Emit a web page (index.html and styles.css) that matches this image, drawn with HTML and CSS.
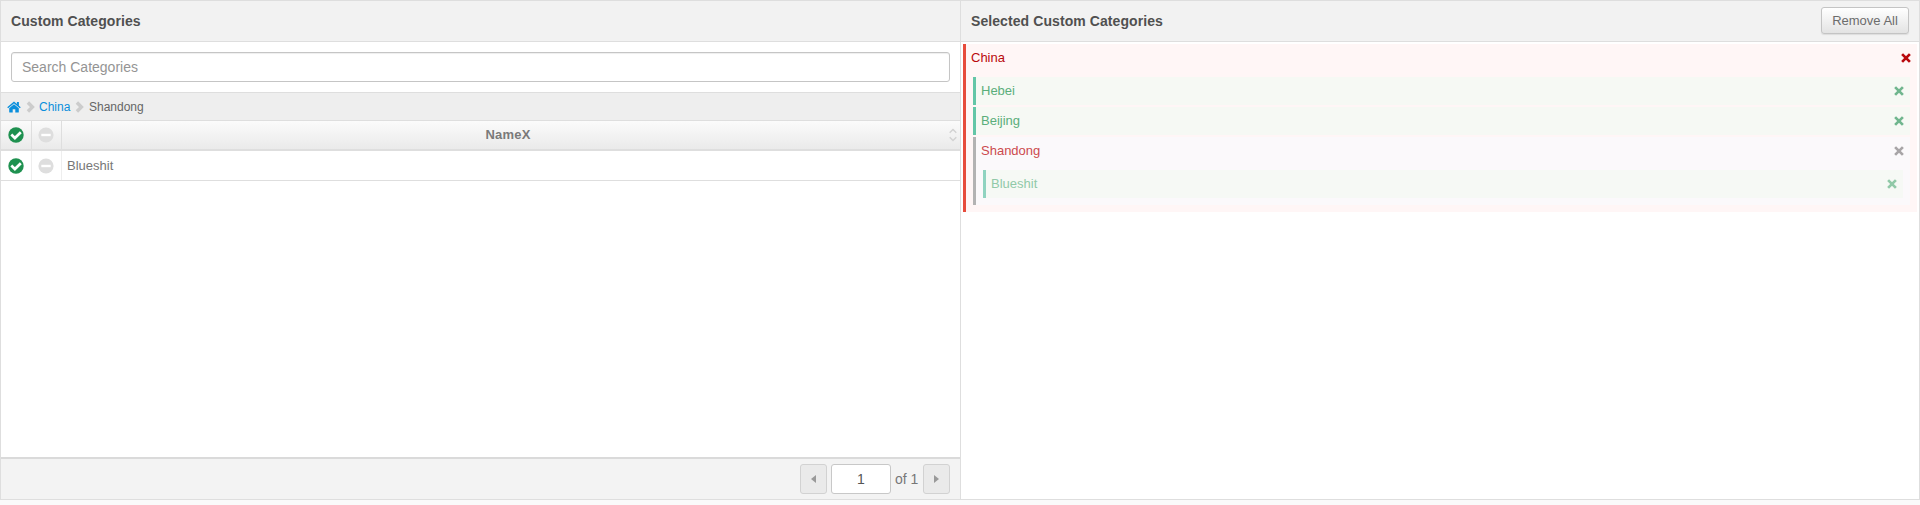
FILE: index.html
```html
<!DOCTYPE html>
<html lang="en">
<head>
<meta charset="utf-8">
<title>Custom Categories</title>
<link rel="stylesheet" href="styles.css">
</head>
<body>
<svg class="defs" width="0" height="0">
  <symbol id="check" viewBox="0 0 16 16"><circle cx="8" cy="8" r="7.7" fill="#1f9150"/><path d="M3.3 7.5 6.9 11 12.8 5.2" fill="none" stroke="#fff" stroke-width="2.7"/></symbol>
  <symbol id="minus" viewBox="0 0 16 16"><circle cx="8" cy="8" r="7.6" fill="#dedede"/><path d="M3.3 8h9.4" stroke="#fff" stroke-width="2.4"/></symbol>
  <symbol id="chevron" viewBox="0 0 9 12"><path d="M1.9 1.5 6.4 6 1.9 10.5" fill="none" stroke="#ccc" stroke-width="3.4"/></symbol>
  <symbol id="cross" viewBox="0 0 10 10"><path d="M1.1 1.1 8.9 8.9M8.9 1.1 1.1 8.9" stroke="currentColor" stroke-width="2.7"/></symbol>
</svg>
<main class="picker">
  <section class="panel available">
    <header class="panel-header"><h2 class="title">Custom Categories</h2></header>
    <div class="search"><input class="search-input" type="text" placeholder="Search Categories"></div>
    <nav class="breadcrumb">
      <svg class="home" viewBox="0 0 14 12"><path d="M7 3.2 11.8 7.2v3.7a.7.7 0 0 1-.7.7H8.3V8.2H5.7v3.4H2.9a.7.7 0 0 1-.7-.7V7.2z"/><path d="M.7 6.7 7 1.4l6.3 5.3" fill="none" stroke="#0a8fdc" stroke-width="1.4"/><path d="M9.9 1h2v4.2l-2-1.7z"/></svg>
      <svg class="chevron"><use href="#chevron"/></svg>
      <a class="crumb-link">China</a>
      <svg class="chevron"><use href="#chevron"/></svg>
      <span class="crumb-current">Shandong</span>
    </nav>
    <div class="row head">
      <div class="cell action"><svg class="mark"><use href="#check"/></svg></div>
      <div class="cell action"><svg class="mark"><use href="#minus"/></svg></div>
      <div class="cell name"><span class="name-label">NameX</span><svg class="sort" viewBox="0 0 8 14"><path d="M.7 4.8 4 1.5l3.3 3.3M.7 9.2 4 12.5l3.3-3.3" fill="none" stroke="#d2d2d2" stroke-width="1.4"/></svg></div>
    </div>
    <div class="row">
      <div class="cell action"><svg class="mark"><use href="#check"/></svg></div>
      <div class="cell action"><svg class="mark"><use href="#minus"/></svg></div>
      <div class="cell name"><span class="row-label">Blueshit</span></div>
    </div>
    <footer class="pager">
      <button class="page-btn"><svg class="arrow" viewBox="0 0 5 8"><path d="M5 0v8L0 4z"/></svg></button>
      <input class="page-input" type="text" value="1">
      <span class="page-total">of 1</span>
      <button class="page-btn"><svg class="arrow" viewBox="0 0 5 8"><path d="M0 0v8l5-4z"/></svg></button>
    </footer>
  </section>
  <section class="panel selected">
    <header class="panel-header"><h2 class="title selected-title">Selected Custom Categories</h2><button class="remove-all">Remove All</button></header>
    <div class="node root">
      <div class="node-row"><span class="label china">China</span><svg class="cross"><use href="#cross"/></svg></div>
      <div class="children">
        <div class="node included"><div class="node-row"><span class="label">Hebei</span><svg class="cross"><use href="#cross"/></svg></div></div>
        <div class="node included"><div class="node-row"><span class="label">Beijing</span><svg class="cross"><use href="#cross"/></svg></div></div>
        <div class="node partial">
          <div class="node-row"><span class="label">Shandong</span><svg class="cross"><use href="#cross"/></svg></div>
          <div class="children">
            <div class="node nested"><div class="node-row"><span class="label">Blueshit</span><svg class="cross"><use href="#cross"/></svg></div></div>
          </div>
        </div>
      </div>
    </div>
  </section>
</main>
</body>
</html>
```
FILE: styles.css
```css
* { box-sizing: border-box; }
body { margin: 0; background: #fafafa; color: #666; font: 13px/16px "Liberation Sans", Arial, sans-serif; }
button, input { font: inherit; margin: 0; }
svg { display: block; flex: none; }
.defs { position: absolute; }
.picker { display: flex; height: 500px; border: 1px solid #dedede; background: #fff; }
.panel { display: flex; flex-direction: column; }
.available { width: 960px; border-right: 1px solid #dedede; }
.selected { flex: 1; }
.panel-header { display: flex; align-items: center; justify-content: space-between; height: 41px; padding: 0 10px; background: #f2f2f2; border-bottom: 1px solid #dedede; }
.title { margin: 0; font-size: 14px; line-height: 20px; color: #505050; letter-spacing: 0.08px; }
.remove-all { width: 88px; height: 27px; margin-bottom: 1px; padding: 0; border: 1px solid #c4c4c4; border-radius: 3px; background: linear-gradient(#fff, #e3e3e3); color: #6c6c6c; box-shadow: 0 1px 1px #ddd; }
.search { height: 51px; padding: 10px; border-bottom: 1px solid #dedede; }
.search-input { display: block; width: 100%; height: 30px; padding: 0 10px; border: 1px solid #c5c5c5; border-radius: 3px; box-shadow: inset 0 1px 1px #eee; font-size: 14px; }
.search-input::placeholder { color: #949494; }
.breadcrumb { display: flex; align-items: center; height: 28px; padding-left: 6px; background: #eee; border-bottom: 1px solid #dedede; font-size: 12px; }
.home { width: 14px; height: 12px; margin-right: 5px; fill: #0a8fdc; }
.chevron { width: 9px; height: 12px; }
.crumb-link { width: 32px; margin: 0 4px 0 4px; color: #0a8fdc; }
.crumb-current { margin-left: 5px; }
.row { display: flex; height: 30px; border-bottom: 1px solid #dedede; }
.head { background: linear-gradient(#fbfbfb, #eaeaea); border-bottom-width: 2px; }
.cell { display: flex; align-items: center; }
.action { justify-content: flex-start; padding-left: 6px; border-right: 1px solid #eee; width: 30px; }
.action:first-child { width: 31px; padding-left: 7px; }
.head .action { border-color: #dedede; }
.mark { width: 16px; height: 16px; }
.name { flex: 1; padding-left: 5px; }
.name-label { flex: 1; text-align: center; font-weight: bold; color: #7a7a7a; letter-spacing: 0.2px; }
.row-label { color: #777; }
.sort { width: 8px; height: 14px; margin-right: 3px; }
.pager { display: flex; align-items: center; justify-content: flex-end; height: 42px; margin-top: auto; padding-right: 10px; background: #f3f3f3; border-top: 2px solid #dadada; font-size: 14px; }
.page-btn { display: flex; align-items: center; justify-content: center; width: 27px; height: 30px; padding: 0; border: 1px solid #d2d2d2; border-radius: 3px; background: #eaeaea; }
.arrow { width: 5px; height: 8px; fill: #999; }
.page-input { width: 60px; height: 30px; margin: 0 4px; padding: 0; text-align: center; border: 1px solid #c8c8c8; border-radius: 3px; color: #555; }
.page-total { width: 28px; color: #777; }
.node { border-left: 3px solid; }
.root { margin: 2px 2px 0 2px; background: #fff6f6; border-color: #e74c3c; }
.included { background: #f6f9f4; border-color: #63c6a7; color: #5aae7b; }
.partial { background: #fbf9fb; border-color: #b3b3b3; color: #cc4a4e; }
.nested { background: #f6f9f5; border-color: #90d3c0; color: #91c9a8; }
.node-row { display: flex; align-items: center; justify-content: space-between; height: 28px; padding: 0 6px 0 5px; }
.china { color: #b9090d; }
.children { display: grid; gap: 2px; padding: 5px 7px 7px; }
.cross { width: 10px; height: 10px; color: #b9090d; }
.included .cross { color: #70b68e; }
.partial .cross { color: #a8a5a7; }
.nested .node-row .cross { color: #91c9a8; }
```
